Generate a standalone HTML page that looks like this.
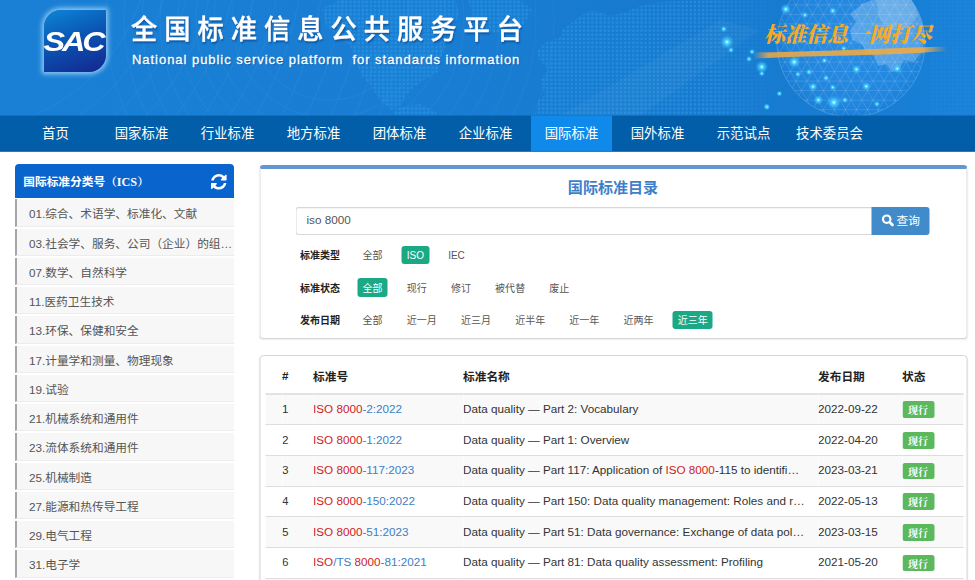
<!DOCTYPE html>
<html lang="zh-CN">
<head>
<meta charset="utf-8">
<title>全国标准信息公共服务平台</title>
<style>
*{box-sizing:border-box;margin:0;padding:0}
html,body{width:975px;height:580px;overflow:hidden;background:#fff}
body{font-family:"Liberation Sans","Noto Sans CJK SC",sans-serif;color:#333;position:relative}
.abs{position:absolute}
#hdr{position:absolute;left:0;top:0;width:975px;height:116px;background:#1b80d6;overflow:hidden}
#hdr svg{position:absolute;left:0;top:0}
#logo{position:absolute;left:44px;top:10px;width:62px;height:62px;border-radius:17px 0 17px 0;
 background:linear-gradient(160deg,#0d86d8 0%,#0a56b4 45%,#14258e 100%);
 box-shadow:0 0 5px 2px rgba(190,230,255,.75)}
#logo span{position:absolute;left:-2.3px;top:17px;width:62px;text-align:center;font:italic bold 27px/30px "Liberation Sans",sans-serif;color:#fff;letter-spacing:-2.6px;transform:scaleX(1.2);white-space:nowrap}
#title{position:absolute;left:131px;top:10px;font-size:26.3px;line-height:40px;font-weight:500;color:#fff;letter-spacing:6.95px;white-space:nowrap;text-shadow:1px 2px 2px rgba(0,40,110,.5);-webkit-text-stroke:.35px #fff;transform:scaleY(1.04);transform-origin:0 50%}
#sub{position:absolute;left:132px;top:52px;font-size:13px;line-height:16px;color:#fff;letter-spacing:.96px;white-space:pre;text-shadow:1px 1px 1px rgba(0,40,110,.4);-webkit-text-stroke:.3px #fff}
#slogan{position:absolute;left:764px;top:18px;font:italic 900 21px/30px "Noto Serif CJK SC","Liberation Serif",serif;color:#f5aa28;white-space:nowrap;letter-spacing:0px}
#nav{position:absolute;left:0;top:115px;width:975px;height:36px;background:#025ea9;transform:translateY(.55px);border-bottom:1px solid #0252a2}
#nav a{position:absolute;top:0;height:36px;width:81px;text-align:center;color:#fff;font-size:13.4px;line-height:36px;text-decoration:none;white-space:nowrap}
#nav a.on{background:#0f8aea}
/* sidebar */
#side{position:absolute;left:15px;top:164px;width:219px}
#side .hd{height:34px;background:#0a64ce;border-radius:4px 4px 0 0;color:#fff;font-weight:bold;font-size:11.7px;line-height:34.8px;overflow:hidden;padding-left:8.3px;position:relative;white-space:nowrap}
#side .hd i{font-style:normal;font-family:"Liberation Serif","Noto Serif CJK SC",serif;font-size:12.2px}#side .hd u{text-decoration:none;font-family:"Noto Serif CJK SC",serif;font-size:11.7px}
#side ul{list-style:none;margin-top:1.3px}
#side li{height:27.25px;margin-bottom:2px;background:#f7f7f7;border-left:2px solid #a6a6a6;font-size:11.7px;line-height:29.4px;color:#555;padding-left:12px;white-space:nowrap;overflow:hidden;text-overflow:ellipsis;border-bottom:1px solid #ececec}
/* panels */
.panel{position:absolute;left:260px;width:708px;transform:translateX(-.5px);background:#fff;border:1px solid #d6d6d6;border-radius:4px;box-shadow:0 1px 2px rgba(0,0,0,.07)}
#p1{top:165px;height:174px;border-top:4px solid #6496d2}
#p1 h3{position:absolute;left:0;top:9px;width:705px;text-align:center;font-size:15.05px;line-height:20px;color:#3e7fca;font-weight:bold}
#inp{position:absolute;left:35px;top:38.4px;width:577px;height:27.3px;border:1px solid #d8d8d8;border-right:none;border-radius:3px 0 0 3px;font-size:11.7px;line-height:24.4px;padding-left:10px;color:#555;box-shadow:inset 0 1px 1px rgba(0,0,0,.05)}
#btn{position:absolute;left:611px;top:38.4px;width:58.4px;height:27.3px;background:#428bca;border-radius:0 3px 3px 0;color:#fff;font-size:11.7px;line-height:27px;padding-left:25px;white-space:nowrap}
#btn svg{position:absolute;left:10px;top:7px}
.row{position:absolute;left:39.4px;height:18.6px;font-size:10.03px;line-height:16.2px;white-space:nowrap}
.row b{display:inline-block;width:57.5px;color:#222;padding-top:2.4px;vertical-align:top}
.row span{display:inline-block;vertical-align:top;padding:2.4px 5.2px 0;height:18.6px;margin-right:13.75px;border-radius:3px;color:#555}
.row span.on{background:#1ba885;color:#fff}
#p2{top:355px;height:240px}
table{position:absolute;left:4.5px;top:4px;width:698px;border-collapse:collapse;font-size:11.7px;table-layout:fixed}
th{height:34px;padding-bottom:2px;text-align:left;font-weight:bold;border-bottom:2px solid #e2e2e2;color:#222;font-size:11.7px}
td{height:30.7px;padding-bottom:2px;border-top:1px solid #ddd;white-space:nowrap;overflow:hidden;text-overflow:ellipsis;color:#333}
tbody tr:nth-child(odd){background:#f9f9f9}
td .r,.r{color:#d01c1c}
td .b{color:#3b80c6}
.lab{display:inline-block;background:#5cb85c;color:#fff;font-weight:bold;font-family:"Liberation Serif","Noto Serif CJK SC",serif;font-size:10px;line-height:19.4px;height:16.8px;width:32.2px;text-align:center;border-radius:2.5px;vertical-align:middle;position:relative;top:1.3px;overflow:hidden}
td:nth-child(4){padding-right:12px}
</style>
</head>
<body>
<div id="hdr">
<svg width="975" height="116" viewBox="0 0 975 116">
<defs>
<linearGradient id="bg" x1="0" y1="0" x2="1" y2="0"><stop offset="0" stop-color="#1a80d5"/><stop offset=".45" stop-color="#197ed3"/><stop offset=".72" stop-color="#1779cd"/><stop offset="1" stop-color="#1981d9"/></linearGradient>
<radialGradient id="gl" cx=".5" cy=".5" r=".5"><stop offset="0" stop-color="#3a9cf2" stop-opacity=".55"/><stop offset=".85" stop-color="#2c90ea" stop-opacity=".45"/><stop offset="1" stop-color="#2488e2" stop-opacity=".25"/></radialGradient>
<radialGradient id="dot"><stop offset="0" stop-color="#e8ffff"/><stop offset=".3" stop-color="#4fd8ff" stop-opacity=".9"/><stop offset="1" stop-color="#28b4ff" stop-opacity="0"/></radialGradient>
<pattern id="dp" width="4.1" height="4.1" patternUnits="userSpaceOnUse"><rect x=".6" y=".6" width="2.6" height="2.6" fill="#2b9ae6" fill-opacity=".55"/></pattern>
<linearGradient id="fade" x1="0" y1="0" x2="1" y2="0"><stop offset="0" stop-color="#fff"/><stop offset=".75" stop-color="#fff"/><stop offset="1" stop-color="#000"/></linearGradient>
<mask id="mk"><rect x="530" y="0" width="250" height="116" fill="url(#fade)"/></mask>
<linearGradient id="br" x1="0" y1="0" x2="1" y2="0"><stop offset="0" stop-color="#eeaa44" stop-opacity="0"/><stop offset=".08" stop-color="#eeaa44" stop-opacity=".85"/><stop offset=".88" stop-color="#eeaa44" stop-opacity=".9"/><stop offset="1" stop-color="#eeaa44" stop-opacity="0"/></linearGradient>
<clipPath id="gc"><circle cx="851" cy="43" r="74"/></clipPath>
</defs>
<rect width="975" height="116" fill="url(#bg)"/>
<circle cx="-40" cy="-60" r="190" fill="none" stroke="#fff" stroke-opacity=".045"/>
<circle cx="-40" cy="-60" r="212" fill="none" stroke="#fff" stroke-opacity=".045"/>
<circle cx="-40" cy="-60" r="234" fill="none" stroke="#fff" stroke-opacity=".045"/>
<circle cx="-40" cy="-60" r="256" fill="none" stroke="#fff" stroke-opacity=".045"/>
<circle cx="-40" cy="-60" r="278" fill="none" stroke="#fff" stroke-opacity=".045"/>
<circle cx="-40" cy="-60" r="300" fill="none" stroke="#fff" stroke-opacity=".045"/>
<circle cx="-40" cy="-60" r="322" fill="none" stroke="#fff" stroke-opacity=".045"/>
<circle cx="-40" cy="-60" r="344" fill="none" stroke="#fff" stroke-opacity=".045"/>
<circle cx="-40" cy="-60" r="366" fill="none" stroke="#fff" stroke-opacity=".045"/>
<circle cx="-40" cy="-60" r="388" fill="none" stroke="#fff" stroke-opacity=".045"/>
<circle cx="-40" cy="-60" r="410" fill="none" stroke="#fff" stroke-opacity=".045"/>
<circle cx="-40" cy="-60" r="432" fill="none" stroke="#fff" stroke-opacity=".045"/>
<circle cx="-40" cy="-60" r="454" fill="none" stroke="#fff" stroke-opacity=".045"/>
<circle cx="330" cy="20" r="80" fill="none" stroke="#fff" stroke-opacity=".04"/>
<circle cx="330" cy="20" r="98" fill="none" stroke="#fff" stroke-opacity=".04"/>
<circle cx="330" cy="20" r="116" fill="none" stroke="#fff" stroke-opacity=".04"/>
<circle cx="330" cy="20" r="134" fill="none" stroke="#fff" stroke-opacity=".04"/>
<circle cx="330" cy="20" r="152" fill="none" stroke="#fff" stroke-opacity=".04"/>
<circle cx="330" cy="20" r="170" fill="none" stroke="#fff" stroke-opacity=".04"/>
<circle cx="330" cy="20" r="188" fill="none" stroke="#fff" stroke-opacity=".04"/>
<circle cx="330" cy="20" r="206" fill="none" stroke="#fff" stroke-opacity=".04"/>
<circle cx="330" cy="20" r="224" fill="none" stroke="#fff" stroke-opacity=".04"/>
<g fill="url(#dp)">
<path d="M322 8 L340 0 L455 0 L460 14 L452 26 L440 34 L446 46 L440 60 L438 72 L424 80 L410 90 L402 104 L392 110 L380 100 L372 88 L362 76 L356 62 L350 46 L338 36 L326 26 Z"/>
<path d="M468 0 L520 0 L532 10 L524 24 L508 34 L490 32 L474 20 Z"/>
<path d="M396 108 L420 104 L436 112 L438 116 L394 116 Z"/>
<path mask="url(#mk)" d="M537 52 L545 42 L560 38 L562 30 L575 20 L590 10 L600 12 L610 16 L625 12 L640 6 L660 2 L700 0 L780 0 L780 116 L535 116 L538 100 L545 95 L540 80 L548 70 L540 60 Z"/>
</g>
<path d="M560 116 L720 20 L760 30 L640 116 Z" fill="#fff" fill-opacity=".035"/>
<rect x="930" y="0" width="45" height="116" fill="url(#dp)" opacity=".35"/>
<circle cx="851" cy="43" r="74" fill="url(#gl)"/>
<g clip-path="url(#gc)" stroke="#fff" stroke-opacity=".22" stroke-width=".6" fill="none">
<path d="M761.0 -42.7L941.0 -42.7"/>
<path d="M761.0 -33.2L941.0 -33.2"/>
<path d="M761.0 -23.7L941.0 -23.7"/>
<path d="M761.0 -14.2L941.0 -14.2"/>
<path d="M761.0 -4.6L941.0 -4.6"/>
<path d="M761.0 4.9L941.0 4.9"/>
<path d="M761.0 14.4L941.0 14.4"/>
<path d="M761.0 23.9L941.0 23.9"/>
<path d="M761.0 33.5L941.0 33.5"/>
<path d="M761.0 43.0L941.0 43.0"/>
<path d="M761.0 52.5L941.0 52.5"/>
<path d="M761.0 62.1L941.0 62.1"/>
<path d="M761.0 71.6L941.0 71.6"/>
<path d="M761.0 81.1L941.0 81.1"/>
<path d="M761.0 90.6L941.0 90.6"/>
<path d="M761.0 100.2L941.0 100.2"/>
<path d="M761.0 109.7L941.0 109.7"/>
<path d="M761.0 119.2L941.0 119.2"/>
<path d="M761.0 128.7L941.0 128.7"/>
<path d="M880.2 -77.8L970.2 78.1"/>
<path d="M872.0 -73.0L962.0 82.8"/>
<path d="M863.7 -68.3L953.7 87.6"/>
<path d="M855.5 -63.5L945.5 92.4"/>
<path d="M847.2 -58.8L937.2 97.1"/>
<path d="M839.0 -54.0L929.0 101.9"/>
<path d="M830.7 -49.2L920.7 106.7"/>
<path d="M822.5 -44.5L912.5 111.4"/>
<path d="M814.2 -39.7L904.2 116.2"/>
<path d="M806.0 -34.9L896.0 120.9"/>
<path d="M797.8 -30.2L887.8 125.7"/>
<path d="M789.5 -25.4L879.5 130.5"/>
<path d="M781.3 -20.7L871.3 135.2"/>
<path d="M773.0 -15.9L863.0 140.0"/>
<path d="M764.8 -11.1L854.8 144.8"/>
<path d="M756.5 -6.4L846.5 149.5"/>
<path d="M748.3 -1.6L838.3 154.3"/>
<path d="M740.0 3.2L830.0 159.0"/>
<path d="M731.8 7.9L821.8 163.8"/>
<path d="M970.2 7.9L880.2 163.8"/>
<path d="M962.0 3.2L872.0 159.0"/>
<path d="M953.7 -1.6L863.7 154.3"/>
<path d="M945.5 -6.4L855.5 149.5"/>
<path d="M937.2 -11.1L847.2 144.8"/>
<path d="M929.0 -15.9L839.0 140.0"/>
<path d="M920.7 -20.7L830.7 135.2"/>
<path d="M912.5 -25.4L822.5 130.5"/>
<path d="M904.2 -30.2L814.2 125.7"/>
<path d="M896.0 -34.9L806.0 120.9"/>
<path d="M887.8 -39.7L797.8 116.2"/>
<path d="M879.5 -44.5L789.5 111.4"/>
<path d="M871.3 -49.2L781.3 106.7"/>
<path d="M863.0 -54.0L773.0 101.9"/>
<path d="M854.8 -58.8L764.8 97.1"/>
<path d="M846.5 -63.5L756.5 92.4"/>
<path d="M838.3 -68.3L748.3 87.6"/>
<path d="M830.0 -73.0L740.0 82.8"/>
<path d="M821.8 -77.8L731.8 78.1"/>
</g>
<circle cx="851" cy="43" r="74" fill="none" stroke="#fff" stroke-opacity=".18" stroke-width="1"/>
<path clip-path="url(#gc)" d="M862 4 L872 0 L918 0 L924 14 L926 34 L922 52 L914 62 L904 60 L900 68 L892 72 L886 64 L878 66 L874 56 L866 52 L862 44 L852 40 L850 30 L856 22 L850 14 Z" fill="#fff" fill-opacity=".22"/>
<path clip-path="url(#gc)" d="M876 0 L914 0 L918 16 L908 28 L892 30 L880 20 Z" fill="#fff" fill-opacity=".15"/>
<circle cx="794.2" cy="62" r="6.4" fill="url(#dot)"/>
<circle cx="761.8" cy="66.9" r="6.4" fill="url(#dot)"/>
<circle cx="761.8" cy="73.5" r="3.2" fill="url(#dot)"/>
<circle cx="824.4" cy="60.5" r="3.5" fill="url(#dot)"/>
<circle cx="856.4" cy="69.3" r="4.8" fill="url(#dot)"/>
<circle cx="897.2" cy="68.7" r="4.8" fill="url(#dot)"/>
<circle cx="797.9" cy="74.2" r="3.2" fill="url(#dot)"/>
<circle cx="809" cy="72" r="3.5" fill="url(#dot)"/>
<circle cx="826" cy="78" r="3.5" fill="url(#dot)"/>
<circle cx="813" cy="86.7" r="4.8" fill="url(#dot)"/>
<circle cx="832.8" cy="87.4" r="3.5" fill="url(#dot)"/>
<circle cx="866.3" cy="86.3" r="4.8" fill="url(#dot)"/>
<circle cx="818.4" cy="100" r="5.1" fill="url(#dot)"/>
<circle cx="833.9" cy="102.4" r="7.2" fill="url(#dot)"/>
<circle cx="844.9" cy="100" r="3.5" fill="url(#dot)"/>
<circle cx="779.4" cy="93.6" r="3.2" fill="url(#dot)"/>
<circle cx="766.6" cy="106.6" r="3.2" fill="url(#dot)"/>
<circle cx="843.8" cy="48.4" r="3.2" fill="url(#dot)"/>
<circle cx="785.8" cy="9.2" r="5.6" fill="url(#dot)"/>
<circle cx="805" cy="15" r="3.5" fill="url(#dot)"/>
<circle cx="832.8" cy="10.8" r="4.0" fill="url(#dot)"/>
<circle cx="752" cy="51.8" r="3.2" fill="url(#dot)"/>
<circle cx="723.8" cy="29" r="3.5" fill="url(#dot)"/>
<circle cx="727" cy="42" r="7.2" fill="url(#dot)"/>
<circle cx="731" cy="50" r="3.2" fill="url(#dot)"/>
<circle cx="749" cy="59" r="3.2" fill="url(#dot)"/>
<circle cx="767" cy="107" r="3.2" fill="url(#dot)"/>
<circle cx="820" cy="30" r="3.2" fill="url(#dot)"/>
<circle cx="877" cy="104" r="3.2" fill="url(#dot)"/>
<path d="M753 52.5 Q800 52 860 49.5 T947 46.5 L947 51 Q900 54.5 850 55.5 T754 58.5 Z" fill="url(#br)"/>
</svg>
<div id="logo"><span>SAC</span></div>
<div id="title">全国标准信息公共服务平台</div>
<div id="sub">National public service platform  for standards information</div>
<div id="slogan">标准信息一网打尽</div>
</div>
<div id="nav">
<a style="left:15px">首页</a>
<a style="left:101px">国家标准</a>
<a style="left:187px">行业标准</a>
<a style="left:273px">地方标准</a>
<a style="left:359px">团体标准</a>
<a style="left:445px">企业标准</a>
<a style="left:531px" class="on">国际标准</a>
<a style="left:617px">国外标准</a>
<a style="left:703px">示范试点</a>
<a style="left:789px">技术委员会</a>
</div>
<div id="side">
<div class="hd">国际标准分类号<u>（</u><i>ICS</i><u>）</u><svg style="position:absolute;left:196.3px;top:10.2px" width="15.6" height="15.6" viewBox="0 0 1536 1536"><path fill="#fff" d="M1511 928q0 5-1 7-64 268-268 434.500t-478 166.500q-146 0-282.500-55t-243.500-157l-129 129q-19 19-45 19t-45-19-19-45v-448q0-26 19-45t45-19h448q26 0 45 19t19 45-19 45l-137 137q71 66 161 102t187 36q134 0 250-65t186-179q11-17 53-117 8-23 30-23h192q13 0 22.500 9.500t9.500 22.500zM1536 128v448q0 26-19 45t-45 19h-448q-26 0-45-19t-19-45 19-45l138-138q-148-137-349-137-134 0-250 65t-186 179q-11 17-53 117-8 23-30 23h-199q-13 0-22.500-9.500t-9.500-22.500v-7q65-268 270-434.500t480-166.500q146 0 284 55.500t245 156.500l130-129q19-19 45-19t45 19 19 45z"/></svg></div>
<ul>
<li>01.综合、术语学、标准化、文献</li>
<li>03.社会学、服务、公司（企业）的组织和管理、行政、运输</li>
<li>07.数学、自然科学</li>
<li>11.医药卫生技术</li>
<li>13.环保、保健和安全</li>
<li>17.计量学和测量、物理现象</li>
<li>19.试验</li>
<li>21.机械系统和通用件</li>
<li>23.流体系统和通用件</li>
<li>25.机械制造</li>
<li>27.能源和热传导工程</li>
<li>29.电气工程</li>
<li>31.电子学</li>
<li>33.电信、音频和视频工程</li>
</ul>
</div>
<div class="panel" id="p1">
<h3>国际标准目录</h3>
<div id="inp">iso 8000</div>
<div id="btn"><svg width="13" height="13" viewBox="0 0 13 13"><circle cx="5.2" cy="5.2" r="3.7" fill="none" stroke="#fff" stroke-width="2.2"/><path d="M8.3 8.3L11 11" stroke="#fff" stroke-width="2.7" stroke-linecap="round"/></svg>查询</div>
<div class="row" style="top:76.7px"><b>标准类型</b><span>全部</span><span class="on">ISO</span><span>IEC</span></div>
<div class="row" style="top:109.4px"><b>标准状态</b><span class="on">全部</span><span>现行</span><span>修订</span><span>被代替</span><span>废止</span></div>
<div class="row" style="top:141.9px"><b>发布日期</b><span>全部</span><span>近一月</span><span>近三月</span><span>近半年</span><span>近一年</span><span>近两年</span><span class="on">近三年</span></div>
</div>
<div class="panel" id="p2">
<table>
<colgroup><col style="width:17px"><col style="width:31px"><col style="width:150px"><col style="width:355px"><col style="width:84px"><col style="width:61px"></colgroup>
<thead><tr><th></th><th>#</th><th>标准号</th><th>标准名称</th><th>发布日期</th><th>状态</th></tr></thead>
<tbody>
<tr><td></td><td>1</td><td><span class="r">ISO 8000</span><span class="b">-2:2022</span></td><td>Data quality — Part 2: Vocabulary</td><td>2022-09-22</td><td><span class="lab">现行</span></td></tr>
<tr><td></td><td>2</td><td><span class="r">ISO 8000</span><span class="b">-1:2022</span></td><td>Data quality — Part 1: Overview</td><td>2022-04-20</td><td><span class="lab">现行</span></td></tr>
<tr><td></td><td>3</td><td><span class="r">ISO 8000</span><span class="b">-117:2023</span></td><td>Data quality — Part 117: Application of <span class="r">ISO 8000</span>-115 to identifi…</td><td>2023-03-21</td><td><span class="lab">现行</span></td></tr>
<tr><td></td><td>4</td><td><span class="r">ISO 8000</span><span class="b">-150:2022</span></td><td>Data quality — Part 150: Data quality management: Roles and r…</td><td>2022-05-13</td><td><span class="lab">现行</span></td></tr>
<tr><td></td><td>5</td><td><span class="r">ISO 8000</span><span class="b">-51:2023</span></td><td>Data quality — Part 51: Data governance: Exchange of data pol…</td><td>2023-03-15</td><td><span class="lab">现行</span></td></tr>
<tr><td></td><td>6</td><td><span class="r">ISO</span><span class="b">/TS </span><span class="r">8000</span><span class="b">-81:2021</span></td><td>Data quality — Part 81: Data quality assessment: Profiling</td><td>2021-05-20</td><td><span class="lab">现行</span></td></tr>
<tr><td></td><td>7</td><td><span class="r">ISO 8000</span><span class="b">-66:2021</span></td><td>Data quality — Part 66: Data quality management</td><td>2021-05-20</td><td><span class="lab">现行</span></td></tr>
</tbody>
</table>
</div>
</body>
</html>
